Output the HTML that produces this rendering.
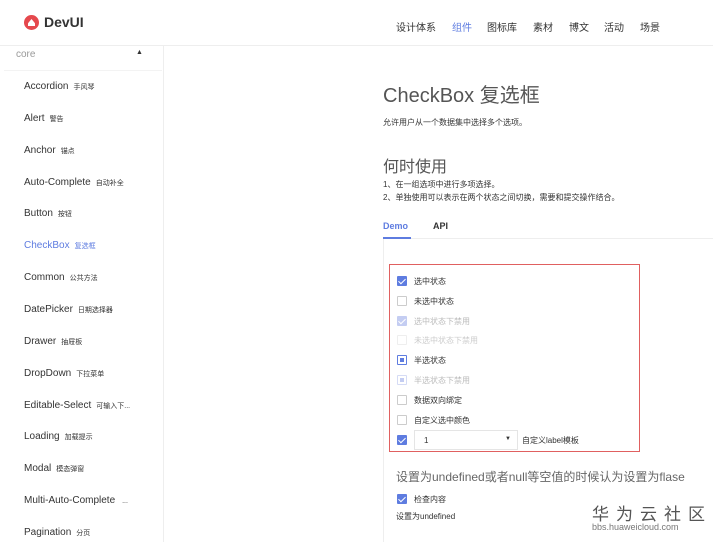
<!DOCTYPE html>
<html><head><meta charset="utf-8"><style>
*{margin:0;padding:0;box-sizing:border-box}
body{width:713px;height:542px;overflow:hidden;background:#fff;font-family:"Liberation Sans","Noto Sans CJK SC",sans-serif;color:#333;position:relative}
.a{position:absolute;white-space:nowrap}
.side{font-size:10px;color:#333;left:24px}
.side small{font-size:7px;margin-left:5px}
.nav{top:19px;font-size:10px;color:#333}
.cb{position:absolute;width:10px;height:10px;border:1px solid #ccc;border-radius:1px;background:#fff}
.ck{background:#5e7ce0;border-color:#5e7ce0}
.ck::after{content:"";position:absolute;left:2px;top:0px;width:3px;height:6px;border:solid #fff;border-width:0 1.5px 1.5px 0;transform:rotate(45deg)}
.lb{font-size:8px;color:#333;left:414px}
</style></head><body>
<div class="a" style="left:0;top:45px;width:713px;height:1px;background:#eee"></div>
<div class="a" style="left:24px;top:15px;width:15px;height:15px;border-radius:50%;background:#e5484d"></div>
<div class="a" style="left:28px;top:19px;width:7px;height:7px;background:#fff;clip-path:polygon(50% 0,100% 60%,100% 100%,0 100%,0 60%)"></div>
<div class="a" style="left:44px;top:14px;font-size:14px;font-weight:bold;color:#333">DevUI</div>
<div class="a nav" style="left:396px">设计体系</div>
<div class="a nav" style="left:452px;color:#5e7ce0">组件</div>
<div class="a nav" style="left:487px">图标库</div>
<div class="a nav" style="left:533px">素材</div>
<div class="a nav" style="left:569px">博文</div>
<div class="a nav" style="left:604px">活动</div>
<div class="a nav" style="left:640px">场景</div>
<div class="a" style="left:163px;top:46px;width:1px;height:496px;background:#eee"></div>
<div class="a" style="left:16px;top:49px;font-size:10px;color:#999">core</div>
<div class="a" style="left:136px;top:49px;font-size:7px;color:#333">▲</div>
<div class="a" style="left:4px;top:70px;width:158px;height:1px;background:#f3f3f3"></div>
<div class="a side" style="top:81px">Accordion<small>手风琴</small></div>
<div class="a side" style="top:113px">Alert<small>警告</small></div>
<div class="a side" style="top:145px">Anchor<small>锚点</small></div>
<div class="a side" style="top:177px">Auto-Complete<small>自动补全</small></div>
<div class="a side" style="top:208px">Button<small>按钮</small></div>
<div class="a side" style="top:240px;color:#5e7ce0">CheckBox<small>复选框</small></div>
<div class="a side" style="top:272px">Common<small>公共方法</small></div>
<div class="a side" style="top:304px">DatePicker<small>日期选择器</small></div>
<div class="a side" style="top:336px">Drawer<small>抽屉板</small></div>
<div class="a side" style="top:368px">DropDown<small>下拉菜单</small></div>
<div class="a side" style="top:400px">Editable-Select<small>可输入下...</small></div>
<div class="a side" style="top:431px">Loading<small>加载提示</small></div>
<div class="a side" style="top:463px">Modal<small>模态弹窗</small></div>
<div class="a side" style="top:495px">Multi-Auto-Complete<small> ...</small></div>
<div class="a side" style="top:527px">Pagination<small>分页</small></div>
<div class="a" style="left:383px;top:79px;font-size:20px;color:#555">CheckBox 复选框</div>
<div class="a" style="left:383px;top:117px;font-size:8px;color:#333">允许用户从一个数据集中选择多个选项。</div>
<div class="a" style="left:383px;top:153px;font-size:16px;color:#555">何时使用</div>
<div class="a" style="left:383px;top:179px;font-size:8px;color:#333">1、在一组选项中进行多项选择。</div>
<div class="a" style="left:383px;top:192px;font-size:8px;color:#333">2、单独使用可以表示在两个状态之间切换，需要和提交操作结合。</div>
<div class="a" style="left:383px;top:221px;font-size:9px;font-weight:bold;color:#5e7ce0">Demo</div>
<div class="a" style="left:433px;top:221px;font-size:9px;font-weight:bold;color:#333">API</div>
<div class="a" style="left:383px;top:238px;width:330px;height:1px;background:#eee"></div>
<div class="a" style="left:383px;top:237px;width:28px;height:2px;background:#5e7ce0"></div>
<div class="a" style="left:383px;top:239px;width:1px;height:303px;background:#eee"></div>
<div class="a" style="left:389px;top:264px;width:251px;height:188px;border:1px solid #e06060"></div>
<div class="cb ck" style="left:397px;top:276px"></div><div class="a lb" style="top:276px">选中状态</div>
<div class="cb" style="left:397px;top:296px"></div><div class="a lb" style="top:296px">未选中状态</div>
<div class="cb ck" style="left:397px;top:316px;background:#c4cdf2;border-color:#c4cdf2"></div><div class="a lb" style="top:316px;color:#bbb">选中状态下禁用</div>
<div class="cb" style="left:397px;top:335px;border-color:#eee"></div><div class="a lb" style="top:335px;color:#ccc">未选中状态下禁用</div>
<div class="cb" style="left:397px;top:355px;border-color:#5e7ce0"><div style="position:absolute;left:2px;top:2px;width:4px;height:4px;background:#5e7ce0"></div></div><div class="a lb" style="top:355px">半选状态</div>
<div class="cb" style="left:397px;top:375px;border-color:#d5dbf5"><div style="position:absolute;left:2px;top:2px;width:4px;height:4px;background:#c4cdf2"></div></div><div class="a lb" style="top:375px;color:#bbb">半选状态下禁用</div>
<div class="cb" style="left:397px;top:395px"></div><div class="a lb" style="top:395px">数据双向绑定</div>
<div class="cb" style="left:397px;top:415px"></div><div class="a lb" style="top:415px">自定义选中颜色</div>
<div class="cb ck" style="left:397px;top:435px"></div>
<div class="a" style="left:414px;top:430px;width:104px;height:20px;border:1px solid #e5e5e5;font-size:8px;padding:5px 9px">1<span style="position:absolute;right:6px;top:5px;font-size:6px">▼</span></div>
<div class="a" style="left:522px;top:435px;font-size:8px">自定义label模板</div>
<div class="a" style="left:396px;top:468px;font-size:12px;color:#666">设置为undefined或者null等空值的时候认为设置为flase</div>
<div class="cb ck" style="left:397px;top:494px"></div><div class="a lb" style="top:494px">检查内容</div>
<div class="a" style="left:396px;top:511px;font-size:8px">设置为undefined</div>
<div class="a" style="left:592px;top:500px;font-size:17px;color:#555;letter-spacing:7px">华为云社区</div>
<div class="a" style="left:592px;top:522px;font-size:9px;color:#777">bbs.huaweicloud.com</div>
</body></html>
